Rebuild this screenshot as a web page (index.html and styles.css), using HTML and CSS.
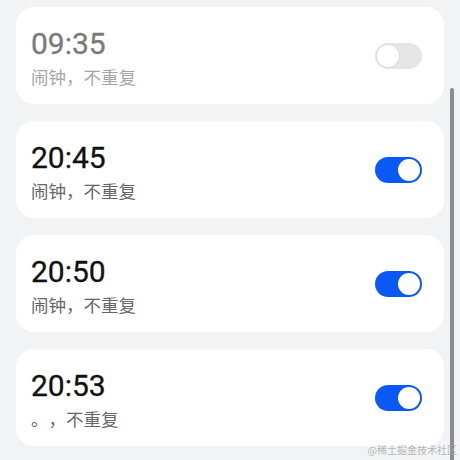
FILE: index.html
```html
<!DOCTYPE html>
<html lang="zh">
<head>
<meta charset="utf-8">
<title>闹钟</title>
<link rel="stylesheet" href="styles.css">
</head>
<body>
<main class="list">
  <section class="card disabled">
    <div class="info">
      <div class="time">09:35</div>
      <div class="label">闹钟，不重复</div>
    </div>
    <span class="switch"><span class="knob"></span></span>
  </section>
  <section class="card">
    <div class="info">
      <div class="time">20:45</div>
      <div class="label">闹钟，不重复</div>
    </div>
    <span class="switch on"><span class="knob"></span></span>
  </section>
  <section class="card">
    <div class="info">
      <div class="time">20:50</div>
      <div class="label">闹钟，不重复</div>
    </div>
    <span class="switch on"><span class="knob"></span></span>
  </section>
  <section class="card">
    <div class="info">
      <div class="time">20:53</div>
      <div class="label">。，不重复</div>
    </div>
    <span class="switch on"><span class="knob"></span></span>
  </section>
</main>
<div class="scrollbar"></div>
<div class="watermark">@稀土掘金技术社区</div>
</body>
</html>
```
FILE: styles.css
```css
html, body {
  margin: 0;
  padding: 0;
  height: 100%;
}
body {
  background: #f1f3f5;
  font-family: Roboto, "Noto Sans CJK SC", sans-serif;
  position: relative;
  overflow: hidden;
}
.list {
  display: flex;
  flex-direction: column;
  gap: 17px;
  padding: 7px 16px 0 16px;
}
.card {
  background: #ffffff;
  border-radius: 18px;
  height: 97px;
  box-sizing: border-box;
  padding: 0 22px 0 15px;
  display: flex;
  align-items: center;
  justify-content: space-between;
}
.info {
  display: flex;
  flex-direction: column;
  gap: 3px;
  padding-top: 4px;
}
.time {
  font-family: Roboto, sans-serif;
  font-size: 30px;
  font-weight: 400;
  line-height: 36px;
  color: #111111;
  -webkit-text-stroke: 0.3px currentColor;
}
.label {
  font-family: "Noto Sans CJK SC", sans-serif;
  font-size: 17.5px;
  line-height: 24px;
  color: #666666;
  text-spacing-trim: space-all;
  font-feature-settings: normal;
}
.disabled .time {
  color: #7a7a7a;
}
.disabled .label {
  color: #a6a6a6;
}
.switch {
  width: 47px;
  height: 26px;
  border-radius: 13px;
  background: #e5e5e5;
  box-sizing: border-box;
  padding: 2px;
  display: flex;
  justify-content: flex-start;
}
.switch.on {
  background: #0a59f7;
  justify-content: flex-end;
}
.knob {
  width: 22px;
  height: 22px;
  border-radius: 50%;
  background: #ffffff;
}
.switch:not(.on) .knob {
  box-shadow: 0 0 0 1px #dcdcdc;
}
.scrollbar {
  position: absolute;
  left: 450px;
  top: 88px;
  width: 4px;
  bottom: 0;
  background: #8c8c8c;
  border-radius: 2px 2px 0 0;
}
.watermark {
  position: absolute;
  right: 3px;
  bottom: 4px;
  font-family: "Noto Sans CJK SC", sans-serif;
  font-size: 10px;
  line-height: 12px;
  color: rgba(160, 160, 160, 0.75);
}
```
